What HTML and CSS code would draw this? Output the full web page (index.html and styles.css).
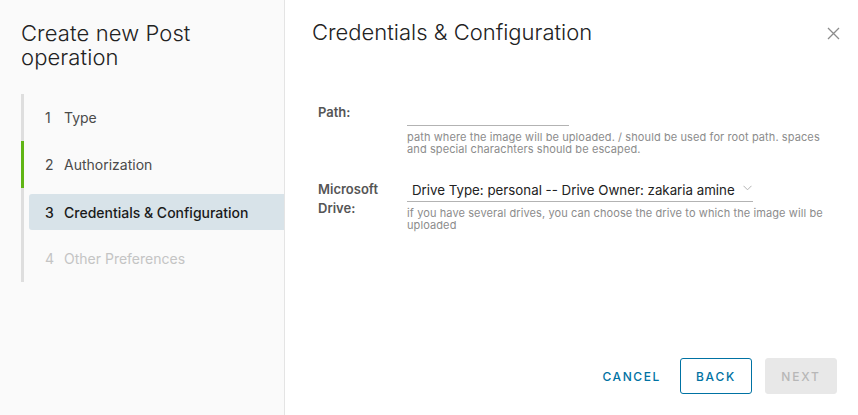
FILE: index.html
```html
<!DOCTYPE html>
<html>
<head>
<meta charset="utf-8">
<link rel="stylesheet" href="styles.css">
</head>
<body>
<div class="modal">
  <aside class="side">
    <h1 class="side-title">Create new Post operation</h1>
    <ol class="steps">
      <li class="step"><span class="num">1</span>Type</li>
      <li class="step done"><span class="num">2</span>Authorization</li>
      <li class="step current"><span class="num">3</span>Credentials &amp; Configuration</li>
      <li class="step disabled"><span class="num">4</span>Other Preferences</li>
    </ol>
  </aside>
  <main class="content">
    <header class="head">
      <h2 class="title">Credentials &amp; Configuration</h2>
      <button class="close" aria-label="Close">
        <svg width="13" height="13" viewBox="0 0 13 13"><path d="M1 1L12 12M12 1L1 12" stroke="#8c8c8c" stroke-width="1.3" fill="none"/></svg>
      </button>
    </header>
    <form class="form">
      <div class="row">
        <label class="label">Path:</label>
        <div class="control">
          <div class="input"></div>
          <div class="helper">path where the image will be uploaded. / should be used for root path. spaces and special charachters should be escaped.</div>
        </div>
      </div>
      <div class="row row2">
        <label class="label">Microsoft Drive:</label>
        <div class="control">
          <div class="select">Drive Type: personal -- Drive Owner: zakaria amine
            <svg class="chev" width="9" height="6" viewBox="0 0 9 6"><path d="M0.5 0.8L4.5 4.8L8.5 0.8" stroke="#b3b3b3" stroke-width="1" fill="none"/></svg>
          </div>
          <div class="helper">if you have several drives, you can choose the drive to which the image will be uploaded</div>
        </div>
      </div>
    </form>
    <footer class="foot">
      <button class="btn link">CANCEL</button>
      <button class="btn outline">BACK</button>
      <button class="btn disabled">NEXT</button>
    </footer>
  </main>
</div>
</body>
</html>
```

FILE: styles.css
```css
* { box-sizing: border-box; }
html, body { margin: 0; padding: 0; }
body {
  font-family: "Inter", "Open Sans", sans-serif;
  color: #313131;
  background: #fff;
  width: 858px;
  height: 415px;
  overflow: hidden;
}
.modal {
  display: flex;
  height: 415px;
}
.side {
  width: 285px;
  background: #fafafa;
  border-right: 1px solid #e4e4e4;
  padding: 21px 0 0 21px;
}
.side-title {
  margin: 0;
  font-weight: 300;
  font-size: 22px;
  line-height: 24px;
  color: #222;
  letter-spacing: 0.1px;
}
.steps {
  list-style: none;
  margin: 25px 0 0 0;
  padding: 0;
  border-left: 3px solid #dedede;
}
.step {
  height: 47px;
  display: flex;
  align-items: center;
  padding-left: 21px;
  font-size: 14px;
  color: #4a4a4a;
  margin-left: -3px;
  border-left: 3px solid transparent;
}
.step.done { border-left-color: #60b515; }
.step .num { width: 19px; }
.step.current {
  background: #d8e3e9;
  color: #1a1a1a;
  height: 36px;
  margin: 6px 0 5px 5px;
  padding-left: 16px;
  border-left: 0;
  border-radius: 3px 0 0 3px;
  font-weight: 500;
}
.step.disabled { color: #c4c4c4; }
.content {
  flex: 1;
  display: flex;
  flex-direction: column;
  padding: 19px 21px 21px 27px;
}
.head {
  display: flex;
  justify-content: space-between;
  align-items: flex-start;
}
.title {
  margin: 0;
  font-weight: 300;
  font-size: 22px;
  line-height: 26px;
  color: #222;
}
.close {
  border: 0;
  background: none;
  padding: 0;
  margin: 8px -3px 0 0;
  width: 13px;
  height: 13px;
  display: flex;
}
.form {
  margin-top: 57px;
  flex: 1;
}
.row {
  display: flex;
  padding-left: 6px;
}
.row2 { margin-top: 24px; }
.label {
  width: 89px;
  font-size: 13px;
  font-weight: 600;
  color: #555;
  line-height: 19px;
  padding-top: 1px;
}
.control { width: 416px; }
.input {
  width: 162px;
  height: 24px;
  border-bottom: 1px solid #b3b3b3;
}
.helper {
  font-size: 11px;
  line-height: 12px;
  color: #8c8c8c;
  margin-top: 5px;
  letter-spacing: 0.1px;
}
.select {
  width: 346px;
  height: 23px;
  border-bottom: 1px solid #b3b3b3;
  font-size: 13.3px;
  padding-left: 5px;
  line-height: 20px;
  color: #222;
  display: flex;
  align-items: center;
  gap: 8px;
  white-space: nowrap;
  padding-bottom: 1px;
}
.chev { flex: none; margin-top: -3px; }
.row2 .helper { margin-top: 5px; }
.foot {
  display: flex;
  justify-content: flex-end;
  gap: 13px;
}
.btn {
  height: 36px;
  min-width: 72px;
  font-family: inherit;
  font-size: 12px;
  font-weight: 500;
  letter-spacing: 1.8px;
  border-radius: 3px;
  background: none;
  border: 1px solid transparent;
  padding: 0 12px;
}
.btn.link { color: #0072a3; margin-right: 5px; padding: 0; min-width: 0; letter-spacing: 1.6px; }
.btn.outline { border-color: #0072a3; color: #0072a3; }
.btn.disabled { background: #e8e8e8; color: #b7b7b7; border-color: #e8e8e8; }
```
